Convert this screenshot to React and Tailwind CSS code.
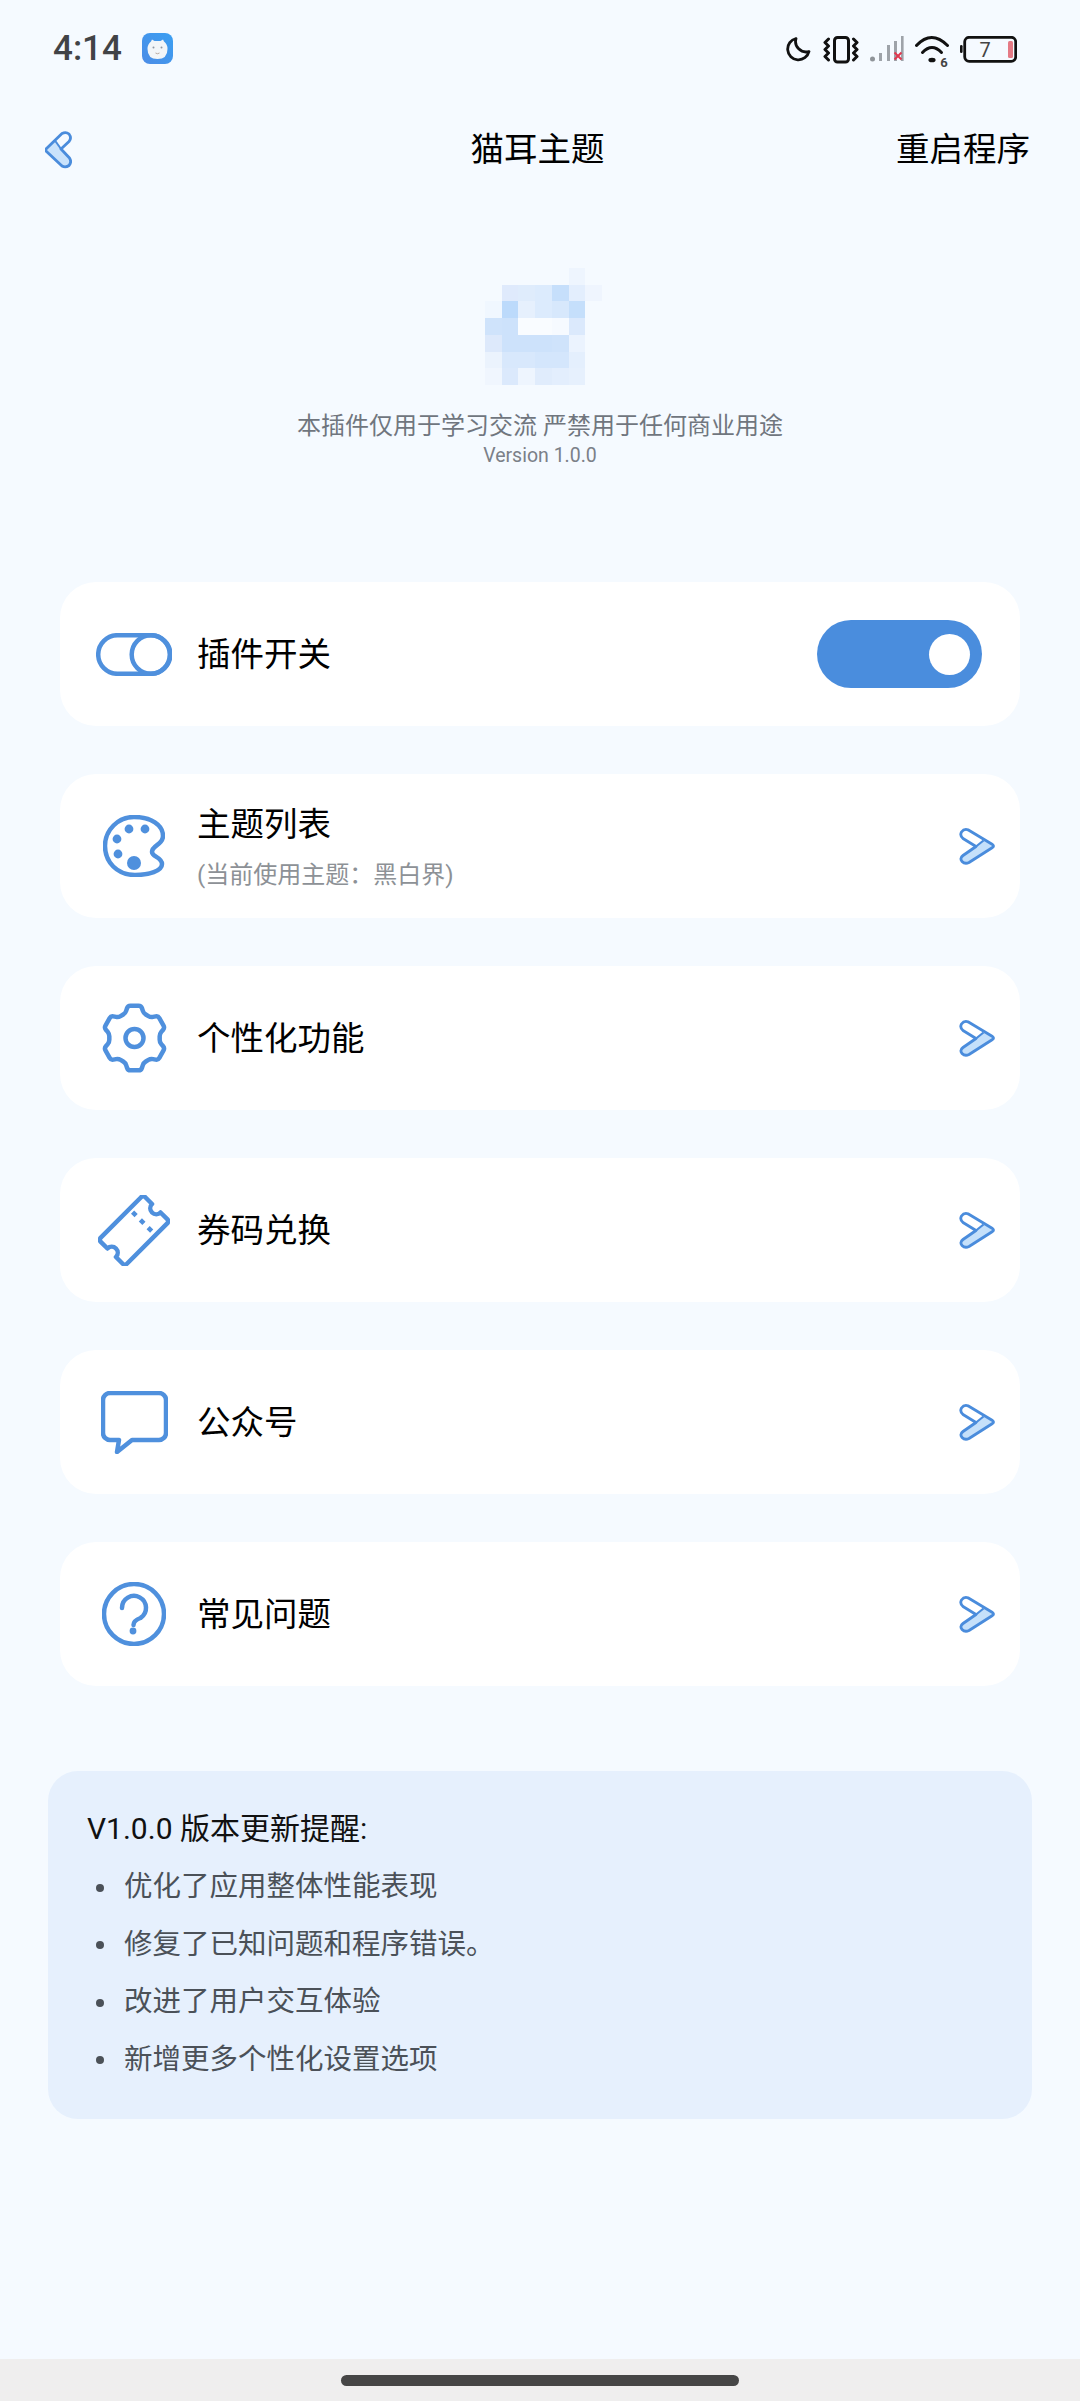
import React from "react";

const BLUE = "#4f90dd";

// blurred logo cells, row by row
const MOSAIC = [
  [null, null, null, null, null, "#eef5fe", null],
  [null, "#dfeafc", "#dfecfc", "#dcebfd", "#c6dffb", "#e3eefd", "#eff5fe"],
  ["#f0f7ff", "#bcdafb", "#e6f0fd", "#dcebfd", "#d7e8fc", "#c5dffb", null],
  ["#cfe3fb", "#cde2fb", "#f9fcff", "#f9fcff", "#f6faff", "#dbe9fc", null],
  ["#dde9fb", "#cde2fb", "#cde2fb", "#cde2fb", "#cfe3fb", "#ebf3fe", null],
  ["#ebf3fd", "#d8e8fc", "#d8e8fc", "#d4e6fc", "#d4e6fc", "#e4effd", null],
  ["#f0f6fe", "#dbe9fc", "#eef5fe", "#e0ecfc", "#e3eefd", "#e6f0fd", null],
];

// closed path through the points with the corners rounded off
function roundedPath(points, r) {
  const n = points.length;
  let d = "";
  points.forEach((p, i) => {
    const prev = points[(i + n - 1) % n];
    const next = points[(i + 1) % n];
    const toward = (a, b) => {
      const len = Math.hypot(b[0] - a[0], b[1] - a[1]);
      const t = Math.min(r, len / 2) / len;
      return [a[0] + (b[0] - a[0]) * t, a[1] + (b[1] - a[1]) * t];
    };
    const s = toward(p, prev);
    const e = toward(p, next);
    d += `${i === 0 ? "M" : "L"}${s[0]} ${s[1]} Q${p[0]} ${p[1]} ${e[0]} ${e[1]} `;
  });
  return d + "Z";
}

// six teeth, each with two base corners and two outer corners
function gearPoints() {
  const pts = [];
  const polar = (deg, r) => {
    const a = (deg * Math.PI) / 180;
    return [33.5 + r * Math.sin(a), 35 - r * 1.04 * Math.cos(a)];
  };
  for (let i = 0; i < 6; i++) {
    const c = i * 60;
    pts.push(polar(c - 21, 25.5), polar(c - 12, 31.8), polar(c + 12, 31.8), polar(c + 21, 25.5));
  }
  return pts;
}

function Moon() {
  return (
    <svg width="25" height="36" viewBox="0 0 25 36" fill="none">
      <path d="M10 2.5A10.8 10.8 0 1 0 23 15.5 A10.5 10.5 0 0 1 10 2.5Z" stroke="#111" strokeWidth="2.8" strokeLinejoin="round" />
    </svg>
  );
}

function Vibrate() {
  return (
    <svg width="36" height="36" viewBox="0 0 36 36" fill="none" stroke="#111" strokeWidth="3" strokeLinecap="round" strokeLinejoin="round">
      <rect x="11.5" y="1.5" width="14" height="24.5" rx="3" />
      <path d="M5.5 3 L2 6.5 L5.5 10 L2 13.5 L5.5 17 L2 20.5 L5.5 24" />
      <path d="M30.5 3 L34 6.5 L30.5 10 L34 13.5 L30.5 17 L34 20.5 L30.5 24" />
    </svg>
  );
}

function Signal() {
  return (
    <svg width="34" height="36" viewBox="0 0 34 36" fill="none">
      <circle cx="2.5" cy="23" r="2.5" fill="#8f9499" />
      <rect x="9" y="17" width="3" height="8" fill="#9ea3a9" />
      <rect x="17" y="9" width="3" height="16" fill="#9ea3a9" />
      <rect x="24" y="5" width="3" height="20" fill="#9ea3a9" />
      <rect x="31" y="0" width="2.6" height="25" fill="#9ea3a9" />
      <path d="M24.5 16.5l7 7M31.5 16.5l-7 7" stroke="#e0384f" strokeWidth="2" />
    </svg>
  );
}

function Wifi() {
  return (
    <svg width="35" height="36" viewBox="0 0 35 36" fill="none">
      <path d="M1.5 9.5 Q16.5 -6.5 32.5 9.5" stroke="#111" strokeWidth="3" strokeLinecap="round" />
      <path d="M7.5 16.5 Q17 6.5 26.5 16.5" stroke="#111" strokeWidth="3" strokeLinecap="round" />
      <ellipse cx="17" cy="24" rx="3.6" ry="2.3" fill="#111" />
      <text x="29" y="31" textAnchor="middle" fontSize="13" fontWeight="700" fill="#444" fontFamily="Roboto, sans-serif">6</text>
    </svg>
  );
}

function Battery() {
  return (
    <svg width="57" height="36" viewBox="0 0 57 36" fill="none">
      <rect x="0" y="9" width="2.6" height="8" rx="1.3" fill="#111" />
      <rect x="4.7" y="1.3" width="51" height="24" rx="4.5" stroke="#111" strokeWidth="2.8" />
      <rect x="48" y="5" width="5" height="17" rx="1.5" fill="#e57a85" />
      <text x="25" y="20.5" textAnchor="middle" fontSize="20" fill="#444" fontFamily="Roboto, sans-serif">7</text>
    </svg>
  );
}

function AppBadge() {
  return (
    <svg width="31" height="31" viewBox="0 0 31 31" className="ml-[20px]">
      <defs>
        <linearGradient id="badge" x1="1" y1="0" x2="0" y2="1">
          <stop offset="0" stopColor="#3a9ff2" />
          <stop offset="1" stopColor="#4c8ce6" />
        </linearGradient>
      </defs>
      <rect width="31" height="31" rx="8" fill="url(#badge)" />
      <path d="M9 8.5 L10 6.5 L12.5 8 H18.5 L21 6.5 L22 8.5 Q25.5 11 25.5 16 Q25.5 26 15.5 26 Q5.5 26 5.5 16 Q5.5 11 9 8.5Z" fill="#f2f5f8" />
      <circle cx="11.5" cy="14.5" r="1" fill="#8d97a3" />
      <circle cx="19.5" cy="14.5" r="1" fill="#8d97a3" />
      <path d="M13.5 20 Q15.5 21.5 17.5 20" stroke="#b9a9a0" strokeWidth="1" fill="none" />
    </svg>
  );
}

function BackArrow() {
  return (
    <svg width="27" height="38" viewBox="0 0 27 38" fill="none">
      <path d="M1.5 17.5 L10 9.5 L16 16.5 L24.5 27 Q27 31 24 34.5 Q20.5 37 17 35 L1.5 20.5 Q0 19 1.5 17.5Z" fill="#c9e2fb" />
      <path d="M1.5 17.5 L17 2.5 Q21 0.5 24 3 Q27 7 24 10.5 L16 18 L24.5 27 Q27 31 24 34.5 Q20.5 37 17 35 L1.5 20.5 Q0 19 1.5 17.5Z" stroke="#4a8cdc" strokeWidth="2.8" strokeLinejoin="round" />
      <path d="M10 9.5 L16 18" stroke="#4a8cdc" strokeWidth="2" />
    </svg>
  );
}

function NextArrow() {
  return (
    <svg width="36" height="37" viewBox="0 0 36 37" fill="none">
      <path d="M17 18.5 L24.5 12.5 L33.5 16.5 Q35.5 18 33.5 19.5 L10 34.5 Q6 36.5 3 33.5 Q0.5 30 4 27.5Z" fill="#c5e0fa" />
      <path d="M9 1.8 L33.5 16.5 Q35.5 18 33.5 19.5 L10 34.5 Q6 36.5 3 33.5 Q0.5 30 4 27.5 L17 18.5 L4 10.5 Q0.5 7.5 2.5 4 Q5 0.5 9 1.8Z" stroke="#4a8cdc" strokeWidth="2.8" strokeLinejoin="round" />
      <path d="M17 18.5 L24.5 12.5" stroke="#4a8cdc" strokeWidth="2.2" />
    </svg>
  );
}

function ToggleIcon() {
  return (
    <svg width="76" height="43" viewBox="0 0 76 43" fill="none" stroke={BLUE} strokeWidth="4.5">
      <rect x="2.2" y="2.2" width="71.6" height="38.6" rx="19.3" />
      <circle cx="55" cy="21.5" r="19.3" />
    </svg>
  );
}

function PaletteIcon() {
  return (
    <svg width="62" height="62" viewBox="0 0 62 62" fill="none">
      <path d="M31 2 C48 2 60 10 60 21 C60 30 49 30 49 37 C49 42 59 42 59 49 C59 56 46 60 32 60 C14 60 2 47 2 31 C2 15 15 2 31 2Z" stroke={BLUE} strokeWidth="4.5" strokeLinejoin="round" />
      <g fill={BLUE}>
        <circle cx="14" cy="24" r="4.4" />
        <circle cx="26" cy="14" r="4.4" />
        <circle cx="42" cy="14" r="4.4" />
        <circle cx="15" cy="39" r="4.4" />
        <circle cx="31" cy="48" r="7" />
      </g>
    </svg>
  );
}

function GearIcon() {
  return (
    <svg width="67" height="70" viewBox="0 0 67 70" fill="none" stroke={BLUE} strokeWidth="4.5">
      <path d={roundedPath(gearPoints(), 2.5)} strokeLinejoin="round" />
      <circle cx="33.5" cy="35" r="9" />
    </svg>
  );
}

function TicketIcon() {
  return (
    <svg width="72" height="71" viewBox="0 0 72 71" fill="none" stroke={BLUE} strokeWidth="4.5">
      <g transform="translate(36 35.5) rotate(-45)">
        <path d="M-31.5 -6 A6 6 0 0 1 -31.5 6 V15.5 A3 3 0 0 0 -28.5 18.5 H28.5 A3 3 0 0 0 31.5 15.5 V6 A6 6 0 0 1 31.5 -6 V-15.5 A3 3 0 0 0 28.5 -18.5 H-28.5 A3 3 0 0 0 -31.5 -15.5Z" strokeLinejoin="round" />
        <path d="M12 -14 V14" strokeDasharray="5 6" />
      </g>
    </svg>
  );
}

function BubbleIcon() {
  return (
    <svg width="67" height="63" viewBox="0 0 67 63" fill="none">
      <path d="M9 2H58A7 7 0 0 1 65 9V42A7 7 0 0 1 58 49H31L16 61L18 49H9A7 7 0 0 1 2 42V9A7 7 0 0 1 9 2Z" stroke={BLUE} strokeWidth="4.5" strokeLinejoin="round" />
    </svg>
  );
}

function QuestionIcon() {
  return (
    <svg width="64" height="64" viewBox="0 0 64 64" fill="none">
      <circle cx="32" cy="32" r="30" stroke={BLUE} strokeWidth="4.5" />
      <path d="M20 26 A12 12 0 1 1 38.5 36 Q31.5 38.5 31.5 43" stroke={BLUE} strokeWidth="4.5" strokeLinecap="round" />
      <circle cx="31" cy="49" r="3.4" fill={BLUE} />
    </svg>
  );
}

function Card({ icon, title, sub, right }) {
  return (
    <div className="flex h-[144px] items-center rounded-[36px] bg-white pl-[36px] pr-[25px]">
      <div className="flex w-[76px] shrink-0 justify-center">{icon}</div>
      <div className="ml-[25px] flex-1 pt-[2px]">
        <div className="text-[33.5px] leading-[40px] text-black">{title}</div>
        {sub && <div className="mt-[16px] text-[24px] leading-[28px] text-[#8d9196]">{sub}</div>}
      </div>
      {right || <NextArrow />}
    </div>
  );
}

export default function App() {
  const notes = ["优化了应用整体性能表现", "修复了已知问题和程序错误。", "改进了用户交互体验", "新增更多个性化设置选项"];

  return (
    <div className="flex h-[2401px] flex-col overflow-hidden bg-[#f5faff] font-['Roboto','Noto_Sans_CJK_SC',sans-serif]">
      {/* status bar */}
      <div className="flex h-[100px] shrink-0 justify-between pl-[53px] pr-[63px]">
        <div className="flex h-[97px] items-center">
          <span className="text-[35px] font-medium leading-none text-[#414346]">4:14</span>
          <AppBadge />
        </div>
        <div className="mt-[36px] flex items-start">
          <Moon />
          <div className="ml-[12px]"><Vibrate /></div>
          <div className="ml-[11px]"><Signal /></div>
          <div className="ml-[11px]"><Wifi /></div>
          <div className="ml-[10px]"><Battery /></div>
        </div>
      </div>

      {/* nav */}
      <div className="grid h-[98px] shrink-0 grid-cols-[1fr_auto_1fr] items-center pl-[45px] pr-[50px] pt-[2px] text-[33.5px] text-black">
        <BackArrow />
        <div>猫耳主题</div>
        <div className="text-right">重启程序</div>
      </div>

      {/* logo */}
      <div className="mt-[70px] flex flex-col items-center">
        <svg width="117" height="117" viewBox="0 0 7 7" shapeRendering="crispEdges" className="ml-[7px]">
          {MOSAIC.map((row, y) =>
            row.map((fill, x) => fill && <rect key={`${x}-${y}`} x={x} y={y} width="1" height="1" fill={fill} />)
          )}
        </svg>
        <div className="mt-[26px] text-[24px] leading-[30px] text-[#70767e]">本插件仅用于学习交流 严禁用于任何商业用途</div>
        <div className="text-[19.5px] leading-[30px] text-[#7b8088]">Version 1.0.0</div>
      </div>

      {/* menu */}
      <div className="mx-[60px] mt-[111px] flex flex-col gap-[48px]">
        <Card
          icon={<ToggleIcon />}
          title="插件开关"
          right={
            <div className="mr-[13px] flex h-[68px] w-[165px] items-center justify-end rounded-full bg-[#4a8ddd] pr-[12px]">
              <div className="h-[41px] w-[41px] rounded-full bg-white" />
            </div>
          }
        />
        <Card icon={<PaletteIcon />} title="主题列表" sub="(当前使用主题：黑白界)" />
        <Card icon={<GearIcon />} title="个性化功能" />
        <Card icon={<TicketIcon />} title="券码兑换" />
        <Card icon={<BubbleIcon />} title="公众号" />
        <Card icon={<QuestionIcon />} title="常见问题" />
      </div>

      {/* update notes */}
      <div className="mx-[48px] mt-[85px] h-[348px] rounded-[30px] bg-[#e6f0fd] pl-[39px] pt-[38px]">
        <div className="text-[30px] leading-[40px] text-[#111]">V1.0.0 版本更新提醒:</div>
        <ul className="mt-[10px] flex flex-col">
          {notes.map((note) => (
            <li key={note} className="flex h-[57.5px] items-center text-[28.5px] text-[#4b5158]">
              <span className="ml-[9px] h-[8px] w-[8px] rounded-full bg-[#4b5158]" />
              <span className="ml-[20px]">{note}</span>
            </li>
          ))}
        </ul>
      </div>

      {/* nav handle */}
      <div className="mt-auto flex h-[42px] shrink-0 items-start justify-center bg-[#efeeee] pt-[16px]">
        <div className="h-[11px] w-[398px] rounded-full bg-[#464646]" />
      </div>
    </div>
  );
}
